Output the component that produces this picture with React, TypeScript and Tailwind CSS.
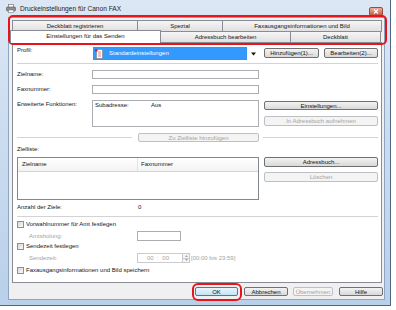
import React from "react";

function Btn({
  className = "",
  children,
  disabled = false,
  primary = false,
}: {
  className?: string;
  children: React.ReactNode;
  disabled?: boolean;
  primary?: boolean;
}) {
  const look = disabled
    ? "border-[#bcc0c4] bg-[#f4f4f4] text-[#a3a3a3]"
    : primary
    ? "border-[#3c7fb1] bg-linear-to-b from-[#eaf6fd] to-[#c2e4f6] text-[#111]"
    : "border-[#707070] bg-linear-to-b from-[#f3f3f3] to-[#d9d9d9] text-[#111]";
  return (
    <div
      className={`flex shrink-0 items-center justify-center rounded-[2px] border text-[6px] leading-none ${look} ${className}`}
    >
      {children}
    </div>
  );
}

function Check({ label }: { label: string }) {
  return (
    <div className="flex h-[7px] items-center">
      <div className="h-[7px] w-[7px] shrink-0 border border-[#8e8f8f] bg-linear-to-br from-[#d8d8d8] to-[#fafafa]" />
      <span className="ml-[2px]">{label}</span>
    </div>
  );
}

function Tab({
  className = "",
  children,
}: {
  className?: string;
  children: React.ReactNode;
}) {
  return (
    <div
      className={`flex shrink-0 items-center justify-center border border-[#898c95] bg-linear-to-b from-[#f6f6f6] to-[#e0e0e0] ${className}`}
    >
      {children}
    </div>
  );
}

export default function App() {
  return (
    <div className="relative h-[310px] w-[396px] overflow-hidden bg-white font-['Liberation_Sans',Arial,sans-serif] text-[6px] leading-[7px] text-[#161616]">
      {/* Window */}
      <div className="flex h-[306px] w-[391px] flex-col border-r border-b border-[#4f6581] bg-linear-to-b from-[#dbe7f4] via-[#c9dbef] to-[#b9d0ea]">
        {/* Title bar */}
        <div className="flex h-[17px] shrink-0 items-start">
          <svg className="ml-[6px] mt-[4px]" width="10" height="9" viewBox="0 0 10 9">
            <rect x="2.5" y="0.5" width="5" height="3" fill="#fff" stroke="#777" strokeWidth="0.7" />
            <rect x="0.5" y="3" width="9" height="4" rx="1" fill="#8a8f96" stroke="#555" strokeWidth="0.6" />
            <rect x="2.5" y="6" width="5" height="2.5" fill="#fff" stroke="#777" strokeWidth="0.6" />
          </svg>
          <span className="ml-[4px] mt-[5px] text-[6.6px] leading-[8px] text-[#1e1e1e]">
            Druckeinstellungen für Canon FAX
          </span>
          <div className="flex-1" />
          <div className="mr-[7px] mt-[7px] flex h-[9px] w-[14px] items-center justify-center rounded-[2px] border border-[#9a4a40] bg-linear-to-b from-[#eab0a4] to-[#c85a46]">
            <svg width="6" height="5" viewBox="0 0 6 5">
              <path d="M1 0.5 L5 4.5 M5 0.5 L1 4.5" stroke="#fff" strokeWidth="1.1" />
            </svg>
          </div>
        </div>

        {/* Client area */}
        <div className="mb-[5px] ml-[8px] mr-[5px] flex flex-1 flex-col border border-[#8fa4bf] bg-[#f0f0f0]">
          {/* Tabs */}
          <div className="flex flex-col pt-[2px]">
            <div className="flex h-[11px] pl-[3px]">
              <Tab className="h-[12px] w-[126px]">Deckblatt registrieren</Tab>
              <Tab className="-ml-px h-[12px] w-[86px]">Spezial</Tab>
              <Tab className="-ml-px h-[12px] w-[160px]">Faxausgangsinformationen und Bild</Tab>
            </div>
            <div className="flex h-[11px] pl-[1px]">
              <div className="relative z-10 -mt-[1px] flex h-[13px] w-[151px] shrink-0 justify-center border border-b-0 border-[#898c95] bg-white pt-[2px]">
                Einstellungen für das Senden
              </div>
              <Tab className="-ml-px h-[12px] w-[131px]">Adressbuch bearbeiten</Tab>
              <Tab className="-ml-px h-[12px] w-[91px]">Deckblatt</Tab>
            </div>
          </div>

          {/* Panel */}
          <div className="ml-[3px] flex h-[241px] w-[370px] flex-col border border-[#898c95] bg-white pl-[4px] pr-[2px] pt-[4px]">
            {/* Profil */}
            <div className="flex h-[13px]">
              <div className="w-[75px] shrink-0">Profil:</div>
              <div className="flex w-[168px] shrink-0 items-center">
                <div className="ml-[1px] flex h-[13px] w-[154px] items-center border border-dotted border-[#9c7a4a] bg-[#3399ff] text-white">
                  <svg className="ml-[1px]" width="8" height="10" viewBox="0 0 8 10">
                    <rect x="1.5" y="0.5" width="6" height="9" fill="#fff" stroke="#7a7a7a" strokeWidth="0.6" />
                    <path d="M3 3 H6 M3 5 H6 M3 7 H6" stroke="#d05050" strokeWidth="0.7" />
                    <rect x="0" y="0" width="2.5" height="2.5" fill="#e02020" />
                  </svg>
                  <span className="ml-[6px]">Standardeinstellungen</span>
                </div>
                <svg className="ml-[4px]" width="5" height="4" viewBox="0 0 5 4">
                  <path d="M0 0.5 H5 L2.5 3.5 Z" fill="#111" />
                </svg>
              </div>
              <Btn className="ml-[4px] mt-[1px] h-[10px] w-[55px]">Hinzufügen(1)...</Btn>
              <Btn className="ml-[5px] mt-[1px] h-[10px] w-[54px]">Bearbeiten(2)...</Btn>
            </div>

            <div className="mr-px mt-[3px] h-px shrink-0 bg-[#d3d3d3]" />

            {/* Zielname */}
            <div className="mt-[6px] flex h-[9px] items-center">
              <div className="w-[75px] shrink-0">Zielname:</div>
              <div className="h-[9px] w-[167px] shrink-0 border border-[#abadb3] bg-white" />
            </div>
            {/* Faxnummer */}
            <div className="mt-[6px] flex h-[9px] items-center">
              <div className="w-[75px] shrink-0">Faxnummer:</div>
              <div className="h-[9px] w-[167px] shrink-0 border border-[#abadb3] bg-white" />
            </div>
            {/* Erweiterte */}
            <div className="mt-[6px] flex h-[27px]">
              <div className="w-[75px] shrink-0 pt-px">Erweiterte Funktionen:</div>
              <div className="flex h-[27px] w-[167px] shrink-0 border border-[#abadb3] bg-white pl-[2px] pt-[1px]">
                <span className="w-[56px]">Subadresse:</span>
                <span>Aus</span>
              </div>
              <div className="ml-[5px] flex w-[114px] flex-col">
                <Btn className="mt-[1px] h-[9px] w-[114px]">Einstellungen...</Btn>
                <Btn className="mt-[6px] h-[10px] w-[114px]" disabled>
                  In Adressbuch aufnehmen
                </Btn>
              </div>
            </div>

            {/* Zu Zielliste */}
            <div className="mt-[6px] flex h-[9px] items-center">
              <div className="h-px w-[115px] shrink-0 bg-[#d3d3d3]" />
              <Btn className="ml-[6px] h-[9px] w-[121px]" disabled>
                Zu Zielliste hinzufügen
              </Btn>
              <div className="ml-[4px] mr-px h-px flex-1 bg-[#d3d3d3]" />
            </div>

            <div className="mt-[4px] h-[7px]">Zielliste:</div>

            {/* List */}
            <div className="mt-[4px] flex h-[43px]">
              <div className="flex h-[43px] w-[242px] shrink-0 flex-col border border-[#828790] bg-white">
                <div className="flex h-[14px] items-center border-b border-[#d5d5d5] bg-linear-to-b from-white to-[#f3f3f3]">
                  <div className="h-full w-[120px] border-r border-[#e3e3e3] pl-[4px] pt-[3px]">Zielname</div>
                  <div className="h-full pl-[3px] pt-[3px]">Faxnummer</div>
                </div>
              </div>
              <div className="ml-[5px] flex w-[114px] flex-col">
                <Btn className="h-[10px] w-[114px]">Adressbuch...</Btn>
                <Btn className="mt-[5px] h-[10px] w-[114px]" disabled>
                  Löschen
                </Btn>
              </div>
            </div>

            <div className="mt-[4px] flex h-[7px]">
              <div className="w-[121px] shrink-0">Anzahl der Ziele:</div>
              <div>0</div>
            </div>

            <div className="mr-px mt-[5px] h-px shrink-0 bg-[#d3d3d3]" />

            <div className="mt-[4px]">
              <Check label="Vorwahlnummer für Amt festlegen" />
            </div>
            <div className="mt-[3px] flex h-[10px] items-center">
              <div className="w-[120px] shrink-0 pl-[12px] text-[#a3a3a3]">Amtsholung:</div>
              <div className="h-[10px] w-[44px] border border-[#abadb3] bg-white" />
            </div>
            <div className="mt-[2px]">
              <Check label="Sendezeit festlegen" />
            </div>
            <div className="mt-[3px] flex h-[10px] items-center">
              <div className="w-[120px] shrink-0 pl-[12px] text-[#a3a3a3]">Sendezeit:</div>
              <div className="flex h-[10px] w-[46px] items-center border border-[#c9cbd0] bg-white pl-[9px] text-[#a3a3a3]">
                <span>00</span>
                <span className="ml-[3px]">:</span>
                <span className="ml-[4px]">00</span>
              </div>
              <div className="flex h-[10px] w-[7px] flex-col border border-l-0 border-[#c9cbd0] bg-[#f4f4f4]">
                <div className="flex flex-1 items-center justify-center border-b border-[#c9cbd0]">
                  <svg width="3" height="2" viewBox="0 0 3 2"><path d="M0 2 L1.5 0 L3 2 Z" fill="#a8a8a8" /></svg>
                </div>
                <div className="flex flex-1 items-center justify-center">
                  <svg width="3" height="2" viewBox="0 0 3 2"><path d="M0 0 L1.5 2 L3 0 Z" fill="#a8a8a8" /></svg>
                </div>
              </div>
              <span className="ml-[1px] text-[#a3a3a3]">[00:00 bis 23:59]</span>
            </div>
            <div className="mt-[4px]">
              <Check label="Faxausgangsinformationen und Bild speichern" />
            </div>
          </div>

          {/* Bottom buttons */}
          <div className="mt-[4px] flex justify-end pr-[1px]">
            <Btn className="h-[9px] w-[43px]" primary>
              OK
            </Btn>
            <Btn className="ml-[6px] h-[9px] w-[44px]">Abbrechen</Btn>
            <Btn className="ml-[5px] h-[9px] w-[40px]" disabled>
              Übernehmen
            </Btn>
            <Btn className="ml-[6px] h-[9px] w-[44px]">Hilfe</Btn>
          </div>
        </div>
      </div>

      {/* Red highlight overlays */}
      <div className="pointer-events-none absolute left-[8px] top-[15px] h-[30px] w-[379px] rounded-[5px] border-2 border-[#e8141c]" />
      <div className="pointer-events-none absolute left-[192px] top-[283px] h-[18px] w-[50px] rounded-[6px] border-2 border-[#e8141c]" />
    </div>
  );
}
